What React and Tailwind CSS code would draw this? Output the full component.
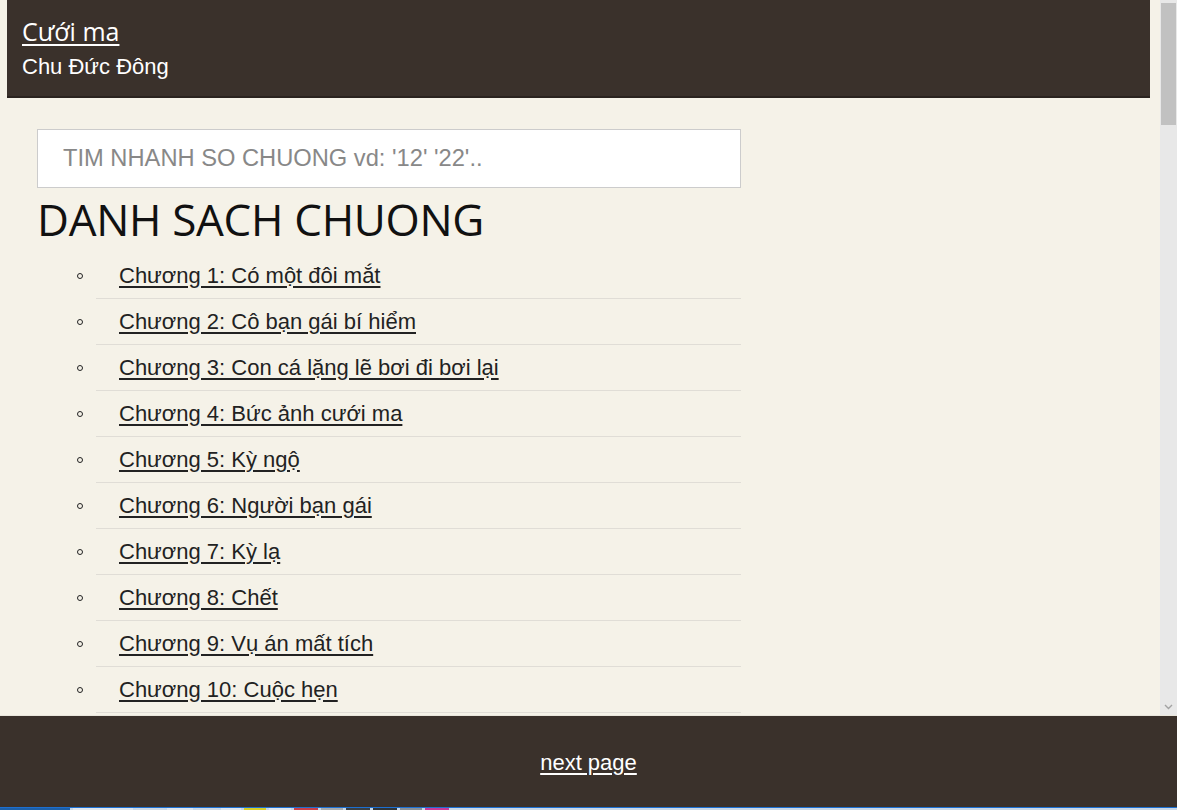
import React from 'react';

const chapters = [
  'Chương 1: Có một đôi mắt',
  'Chương 2: Cô bạn gái bí hiểm',
  'Chương 3: Con cá lặng lẽ bơi đi bơi lại',
  'Chương 4: Bức ảnh cưới ma',
  'Chương 5: Kỳ ngộ',
  'Chương 6: Người bạn gái',
  'Chương 7: Kỳ lạ',
  'Chương 8: Chết',
  'Chương 9: Vụ án mất tích',
  'Chương 10: Cuộc hẹn',
];

// colored bits of the desktop strip under the window
const strip = [
  { w: 'w-[70px]', c: 'bg-[#1d5fa8]' },
  { w: 'w-[60px]', c: 'bg-[#dfe6ee]' },
  { w: 'w-[28px]', c: 'bg-[#cfd9e4]' },
  { w: 'w-[26px]', c: 'bg-[#dfe6ee]' },
  { w: 'w-[22px]', c: 'bg-[#cfd9e4]' },
  { w: 'w-[20px]', c: 'bg-[#dfe6ee]' },
  { w: 'w-[22px]', c: 'bg-[#d8d02a]' },
  { w: 'w-[22px]', c: 'bg-[#dfe6ee]' },
  { w: 'w-[24px]', c: 'bg-[#c8404a]' },
  { w: 'w-[22px]', c: 'bg-[#a8acb0]' },
  { w: 'w-[24px]', c: 'bg-[#3a3f44]' },
  { w: 'w-[24px]', c: 'bg-[#2f3438]' },
  { w: 'w-[22px]', c: 'bg-[#8a9098]' },
  { w: 'w-[24px]', c: 'bg-[#c83a9a]' },
];

export default function App() {
  return (
    <div className="w-[1177px] h-[810px] flex flex-col overflow-hidden bg-[#f5f2e8] font-['Liberation_Sans',Arial,sans-serif]">
      <div className="flex flex-1 min-h-0">
        {/* Page */}
        <div className="flex-1 min-w-0 overflow-hidden pl-[7px] pr-[10px]">
          <header className="h-[98px] bg-[#3a312b] border-b-2 border-[#2a231f] px-[15px] pt-[15px] text-white">
            <a href="#" className="block w-max text-[25px] leading-[33px] underline underline-offset-[3px] font-['Open_Sans','Noto_Sans',sans-serif] text-white">
              Cưới ma
            </a>
            <div className="text-[22px] leading-[30px] mt-[4px]">Chu Đức Đông</div>
          </header>

          <div className="pl-[30px] pt-[31px] w-[734px]">
            <input
              type="text"
              placeholder="TIM NHANH SO CHUONG vd: '12' '22'.."
              className="block w-[704px] h-[59px] bg-white border border-[#cccccc] px-[25px] text-[23.7px] text-[#333] placeholder:text-[#888] outline-none"
            />
            <h2 className="h-[65px] pt-[4px] text-[44px] leading-[54px] text-[#111] font-['Open_Sans','Noto_Sans',sans-serif] tracking-[-0.3px]">
              DANH SACH CHUONG
            </h2>

            <ul>
              {chapters.map((title) => (
                <li key={title} className="flex h-[46px]">
                  <span className="w-[59px] flex items-center justify-end pr-[13px]">
                    <span className="w-[6px] h-[6px] rounded-full border border-[#222]" />
                  </span>
                  <div className="flex-1 flex items-center pl-[23px] border-b border-[#e0ddd6]">
                    <a href="#" className="text-[22px] leading-[26px] text-[#222] underline underline-offset-[3px]">
                      {title}
                    </a>
                  </div>
                </li>
              ))}
            </ul>
          </div>
        </div>

        {/* Scrollbar */}
        <div className="w-[17px] flex flex-col bg-[#e8e8e8] pt-[3px]">
          <div className="mx-[1px] h-[122px] bg-[#c1c1c1]" />
          <div className="flex-1" />
          <div className="h-[17px] flex items-center justify-center">
            <svg width="9" height="6" viewBox="0 0 9 6" fill="none">
              <path d="M1 1l3.5 3.5L8 1" stroke="#a3a3a3" strokeWidth="1.4" />
            </svg>
          </div>
        </div>
      </div>

      {/* Footer */}
      <footer className="h-[92px] shrink-0 bg-[#3a312b] border-t border-[#e9e6dc] flex items-center justify-center">
        <a href="#" className="text-[22px] text-white underline underline-offset-[3px] mt-[1px]">
          next page
        </a>
      </footer>
      <div className="h-[3px] shrink-0 border-t border-[#1c6fd1] bg-[#c9d8e8] flex">
        {strip.map((s, i) => (
          <span key={i} className={`${s.w} ${s.c} mr-[3px] h-full`} />
        ))}
      </div>
    </div>
  );
}
